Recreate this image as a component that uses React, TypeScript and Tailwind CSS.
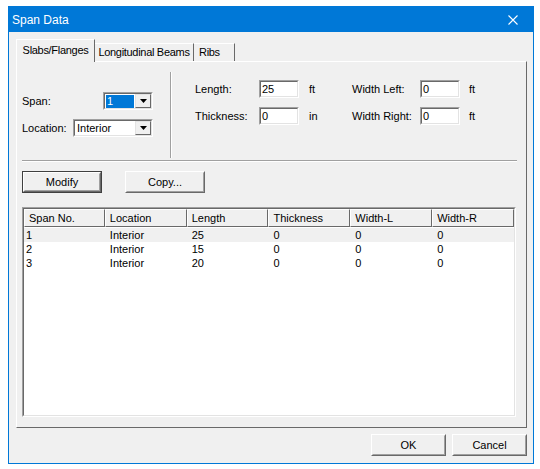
import React from "react";

const font = { fontFamily: '"Liberation Sans", Arial, sans-serif' };

function Arrow() {
  return (
    <svg width="7" height="4" viewBox="0 0 7 4">
      <polygon points="0,0 7,0 3.5,4" fill="#000" />
    </svg>
  );
}

function Combo({ w, value, selected }: { w: string; value: string; selected?: boolean }) {
  return (
    <div className={`${w} h-[18px] border border-t-[#a0a0a0] border-l-[#a0a0a0] border-b-white border-r-white`}>
      <div className="h-full flex bg-white border border-t-[#696969] border-l-[#696969] border-b-[#e3e3e3] border-r-[#e3e3e3]">
        <div className="flex-1 flex items-center px-[1px]">
          <span className={`h-[13px] leading-[13px] pl-[1px] ${selected ? "bg-[#0078d7] text-white flex-1" : "text-black"}`}>{value}</span>
        </div>
        <div className="w-[16px] h-full bg-[#f0f0f0] flex items-center justify-center border border-t-[#e3e3e3] border-l-[#e3e3e3] border-b-[#696969] border-r-[#696969]">
          <Arrow />
        </div>
      </div>
    </div>
  );
}

function Input({ value }: { value: string }) {
  return (
    <div className="w-[40px] h-[18px] border border-t-[#a0a0a0] border-l-[#a0a0a0] border-b-white border-r-white">
      <div className="h-full bg-white border border-t-[#696969] border-l-[#696969] border-b-[#e3e3e3] border-r-[#e3e3e3] flex items-center pl-[1px] text-black">
        {value}
      </div>
    </div>
  );
}

function Button({ label, w, def }: { label: string; w: string; def?: boolean }) {
  return (
    <div className={`${w} h-[22px] ${def ? "border border-[#404040]" : ""}`}>
      <div className="h-full border border-t-white border-l-white border-b-[#696969] border-r-[#696969]">
        <div className="h-full bg-[#f0f0f0] border border-t-[#f0f0f0] border-l-[#f0f0f0] border-b-[#a0a0a0] border-r-[#a0a0a0] flex items-center justify-center text-black">
          {label}
        </div>
      </div>
    </div>
  );
}

const cols = ["Span No.", "Location", "Length", "Thickness", "Width-L", "Width-R"];
const rows = [
  ["1", "Interior", "25", "0", "0", "0"],
  ["2", "Interior", "15", "0", "0", "0"],
  ["3", "Interior", "20", "0", "0", "0"],
];

export default function App() {
  return (
    <div className="w-[540px] h-[469px] bg-white pl-[8px] pt-[6px] text-[11px] text-black" style={font}>
      <div className="w-[526px] h-[458px] border border-[#0078d7] bg-[#f0f0f0] flex flex-col">
        <div className="h-[25px] bg-[#0078d7] flex items-center justify-between pl-[3px] pr-[15px] text-white">
          <span className="text-[12px]">Span Data</span>
          <svg width="10" height="10" viewBox="0 0 10 10">
            <path d="M0.5 0.5 L9.5 9.5 M9.5 0.5 L0.5 9.5" stroke="#fff" strokeWidth="1.1" />
          </svg>
        </div>
        <div className="flex-1 pl-[7px] pt-[7px] flex flex-col">
          {/* Tabs */}
          <div className="flex items-end h-[23px] relative z-10 tracking-[-0.3px]">
            <div className="w-[79px] h-[23px] bg-[#f0f0f0] border-t border-l border-white border-r border-r-[#696969] flex items-center justify-center pb-[1px]">
              Slabs/Flanges
            </div>
            <div className="w-[99px] h-[18px] border-t border-white border-r border-r-[#696969] flex items-center justify-center mb-[1px]">
              Longitudinal Beams
            </div>
            <div className="w-[41px] h-[18px] border-t border-white border-r border-r-[#696969] flex items-center pl-[5px] mb-[1px]">
              Ribs
            </div>
          </div>
          {/* Panel */}
          <div className="w-[511px] h-[367px] -mt-[1px] border-t border-l border-white border-r border-b border-r-[#696969] border-b-[#696969] flex flex-col pl-[5px]">
            <div className="flex h-[98px]">
              <div className="w-[148px] flex flex-col pt-[30px]">
                <div className="flex items-center h-[18px]">
                  <span className="w-[81px]">Span:</span>
                  <Combo w="w-[50px]" value="1" selected />
                </div>
                <div className="flex items-center h-[18px] mt-[9px]">
                  <span className="w-[51px]">Location:</span>
                  <Combo w="w-[80px]" value="Interior" />
                </div>
              </div>
              <div className="mt-[10px] h-[86px] w-[2px] border-l border-l-[#a0a0a0] border-r border-r-white" />
              <div className="flex flex-col pl-[23px] pt-[18px]">
                <div className="flex items-center h-[18px]">
                  <span className="w-[64px]">Length:</span>
                  <Input value="25" />
                  <span className="w-[53px] pl-[10px]">ft</span>
                  <span className="w-[68px]">Width Left:</span>
                  <Input value="0" />
                  <span className="pl-[9px]">ft</span>
                </div>
                <div className="flex items-center h-[18px] mt-[9px]">
                  <span className="w-[64px]">Thickness:</span>
                  <Input value="0" />
                  <span className="w-[53px] pl-[10px]">in</span>
                  <span className="w-[68px]">Width Right:</span>
                  <Input value="0" />
                  <span className="pl-[9px]">ft</span>
                </div>
              </div>
            </div>
            <div className="w-[495px] h-[2px] border-t border-t-[#a0a0a0] border-b border-b-white" />
            <div className="flex mt-[9px] gap-[23px]">
              <Button label="Modify" w="w-[80px]" def />
              <Button label="Copy..." w="w-[80px]" />
            </div>
            <div className="mt-[14px] w-[494px] h-[210px] border border-t-[#a0a0a0] border-l-[#a0a0a0] border-b-white border-r-white">
              <div className="h-full border border-t-[#696969] border-l-[#696969] border-b-[#e3e3e3] border-r-[#e3e3e3] bg-white flex flex-col">
                <div className="flex h-[18px]">
                  {cols.map((c, i) => (
                    <div
                      key={c}
                      className={`${i === 0 ? "w-[81px]" : "w-[82px]"} h-full bg-[#f0f0f0] border border-t-white border-l-white border-b-[#696969] border-r-[#696969] flex items-center pl-[4px]`}
                    >
                      {c}
                    </div>
                  ))}
                </div>
                <div className="mt-[1px]">
                  {rows.map((r, ri) => (
                    <div key={ri} className={`flex h-[14px] items-center ${ri === 0 ? "bg-[#f0f0f0]" : ""}`}>
                      {r.map((v, i) => (
                        <div key={i} className={`${i === 0 ? "w-[81px] pl-[2px]" : "w-[82px] pl-[5px]"} leading-[14px]`}>
                          {v}
                        </div>
                      ))}
                    </div>
                  ))}
                </div>
              </div>
            </div>
          </div>
          <div className="flex justify-end gap-[6px] mt-[6px] pr-[6px]">
            <Button label="OK" w="w-[75px]" />
            <Button label="Cancel" w="w-[75px]" />
          </div>
        </div>
      </div>
    </div>
  );
}
